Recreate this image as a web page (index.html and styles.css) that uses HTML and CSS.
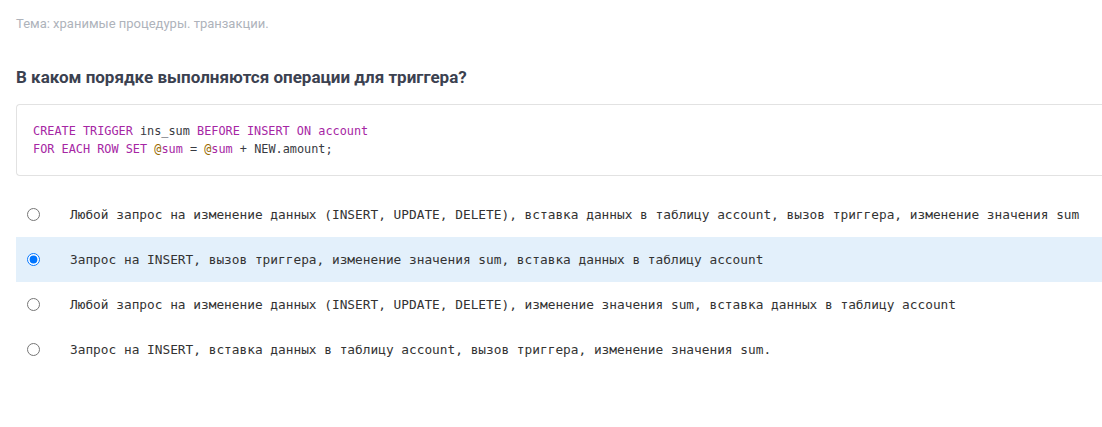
FILE: index.html
```html
<!DOCTYPE html>
<html lang="ru">
<head>
<meta charset="utf-8">
<link rel="stylesheet" href="styles.css">
</head>
<body>
<div class="page">
  <div class="topic">Тема: хранимые процедуры. транзакции.</div>
  <h2 class="question">В каком порядке выполняются операции для триггера?</h2>
  <pre class="code"><span class="kw">CREATE TRIGGER</span> ins_sum <span class="kw">BEFORE INSERT ON</span> <span class="kw">account</span>
<span class="kw">FOR EACH ROW SET</span> <span class="var">@</span><span class="kw">sum</span> = <span class="var">@</span><span class="kw">sum</span> + NEW.amount;</pre>
  <div class="options">
    <label class="option"><input type="radio" name="q"><span class="text">Любой запрос на изменение данных (INSERT, UPDATE, DELETE), вставка данных в таблицу account, вызов триггера, изменение значения sum</span></label>
    <label class="option selected"><input type="radio" name="q" checked><span class="text">Запрос на INSERT, вызов триггера, изменение значения sum, вставка данных в таблицу account</span></label>
    <label class="option"><input type="radio" name="q"><span class="text">Любой запрос на изменение данных (INSERT, UPDATE, DELETE), изменение значения sum, вставка данных в таблицу account</span></label>
    <label class="option"><input type="radio" name="q"><span class="text">Запрос на INSERT, вставка данных в таблицу account, вызов триггера, изменение значения sum.</span></label>
  </div>
</div>
</body>
</html>
```

FILE: styles.css
```css
html, body {
  margin: 0;
  padding: 0;
  background: #ffffff;
  overflow: hidden;
}
body {
  font-family: Roboto, "Noto Sans", sans-serif;
}
.page {
  padding: 14px 0 0 16px;
}
.topic {
  font-size: 13px;
  line-height: 20px;
  color: #aeb3bb;
}
.question {
  margin: 31px 0 15px 0;
  font-size: 17px;
  line-height: 24px;
  font-weight: 700;
  color: #3b4150;
}
.code {
  margin: 0;
  border: 1px solid #e2e2e2;
  border-right: none;
  border-radius: 4px 0 0 4px;
  padding: 17px 16px 17px 16px;
  font-family: "DejaVu Sans Mono", monospace;
  font-size: 11.85px;
  line-height: 18px;
  color: #383a42;
}
.kw { color: #a626a4; }
.var { color: #986801; }
.options {
  margin-top: 16px;
  display: flex;
  flex-direction: column;
}
.option {
  display: flex;
  align-items: center;
  height: 45px;
  cursor: pointer;
}
.option.selected {
  background: #e3f0fb;
}
.option input {
  margin: 0 0 0 11px;
  width: 13px;
  height: 13px;
  flex: none;
}
.option .text {
  margin-left: 30px;
  font-family: "DejaVu Sans Mono", monospace;
  font-size: 12.8px;
  color: #333333;
  white-space: nowrap;
}
```
